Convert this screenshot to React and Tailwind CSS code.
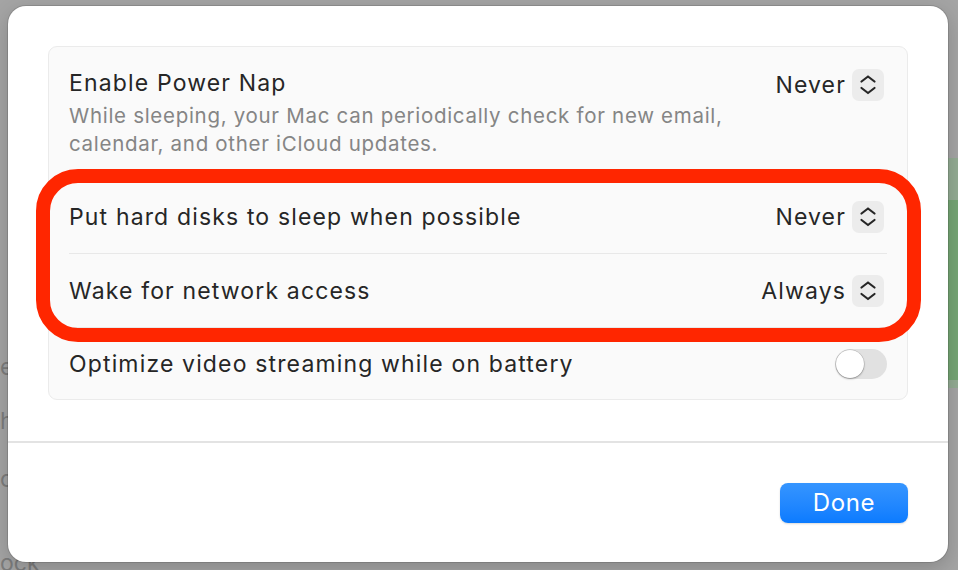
import React from "react";

const rows = [
  { label: "Put hard disks to sleep when possible", value: "Never" },
  { label: "Wake for network access", value: "Always" },
];

const label = "text-[23px] leading-[28px] tracking-[1.15px] text-[#262626]";

function Stepper() {
  return (
    <div className="ml-[6px] mr-[3px] flex h-[32px] w-[32px] items-center justify-center rounded-[7px] bg-[#ececec]">
      <svg width="32" height="32" viewBox="0 0 32 32" fill="none">
        <path d="M9.5 12.5L16 7.5l6.5 5" stroke="#262626" strokeWidth="2.2" strokeLinecap="round" strokeLinejoin="round" />
        <path d="M9.5 19L16 24l6.5-5" stroke="#262626" strokeWidth="2.2" strokeLinecap="round" strokeLinejoin="round" />
      </svg>
    </div>
  );
}

function Toggle() {
  return (
    <div className="flex h-[30px] w-[52px] items-center rounded-full bg-[#e1e1e1] p-[1px]">
      <div className="h-[28px] w-[28px] rounded-full bg-white shadow-[0_0_0_0.5px_rgba(0,0,0,0.18),0_1px_2px_rgba(0,0,0,0.3)]" />
    </div>
  );
}

export default function App() {
  return (
    <div
      className="grid h-[570px] w-[958px] overflow-hidden bg-[#a4a4a4]"
      style={{ fontFamily: "Inter, 'Liberation Sans', sans-serif" }}
    >
      {/* window behind the sheet */}
      <div className="col-start-1 row-start-1 flex">
        <div className="flex w-[60px] flex-col pt-[353px] text-[23px] leading-[28px] text-[#7c7c7c]">
          <div className="h-[54px]">e</div>
          <div className="h-[58px]">h</div>
          <div className="h-[84px]">o</div>
          <div className="h-[21px] overflow-hidden">ock</div>
        </div>
        <div className="flex-1" />
        <div className="flex w-[10px] flex-col pt-[158px]">
          <div className="h-[42px] bg-[#93ab93]" />
          <div className="h-[180px] bg-[#75a574]" />
          <div className="h-[8px] bg-[#93ab93]" />
        </div>
      </div>

      {/* sheet */}
      <div className="col-start-1 row-start-1 ml-[8px] mt-[6px] flex h-[556px] w-[940px] flex-col rounded-[18px] bg-white shadow-[0_0_0_1px_rgba(0,0,0,0.12),0_6px_20px_rgba(0,0,0,0.18)]">
        <div className="relative px-[40px] pt-[40px]">
          <div className="rounded-[9px] border border-[#ebebeb] bg-[#fafafa]">
            <div className="flex items-start px-[20px] pt-[22px] pb-[21px]">
              <div className="flex-1">
                <div className={label}>Enable Power Nap</div>
                <div className="mt-[5px] text-[20.5px] leading-[28px] tracking-[0.7px] text-[#858585]">
                  While sleeping, your Mac can periodically check for new email,
                  <br />
                  calendar, and other iCloud updates.
                </div>
              </div>
              <div className="flex items-center">
                <span className={label}>Never</span>
                <Stepper />
              </div>
            </div>
            <div className="mx-[20px] h-[1px] bg-[#e8e8e8]" />
            {rows.map((r) => (
              <React.Fragment key={r.label}>
                <div className="flex h-[73px] items-center px-[20px]">
                  <span className={"flex-1 " + label}>{r.label}</span>
                  <span className={label}>{r.value}</span>
                  <Stepper />
                </div>
                <div className="mx-[20px] h-[1px] bg-[#e8e8e8]" />
              </React.Fragment>
            ))}
            <div className="flex h-[71px] items-center px-[20px]">
              <span className={"flex-1 " + label}>Optimize video streaming while on battery</span>
              <Toggle />
            </div>
          </div>

          {/* red annotation */}
          <div className="pointer-events-none absolute left-[28px] top-[163px] h-[173px] w-[885px] rounded-[42px] border-[14px] border-[#ff2600]" />
        </div>

        <div className="mt-[41px] h-[2px] bg-[#e3e3e3]" />

        <div className="flex flex-1 items-center justify-end px-[40px]">
          <button className="h-[40px] w-[128px] rounded-[8px] bg-gradient-to-b from-[#3595ff] to-[#0a7bff] text-[24px] tracking-[0.6px] text-white shadow-[0_1px_2px_rgba(0,0,0,0.15)]">
            Done
          </button>
        </div>
      </div>
    </div>
  );
}
